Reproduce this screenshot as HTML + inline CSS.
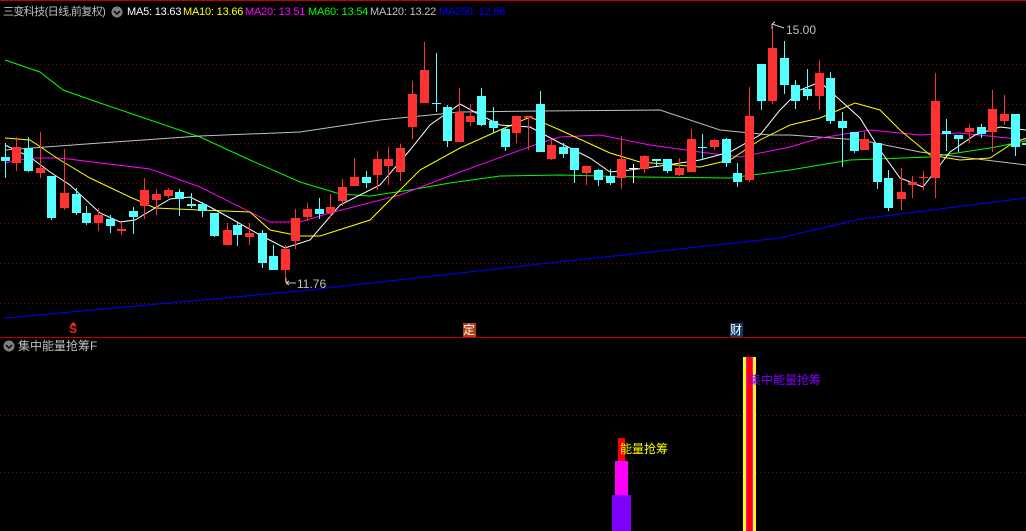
<!DOCTYPE html>
<html><head><meta charset="utf-8">
<style>
html,body{margin:0;padding:0;background:#000;overflow:hidden}
body{width:1026px;height:531px;position:relative;font-family:"Liberation Sans","Noto Sans CJK SC",sans-serif}
.t{position:absolute;font-size:12px;white-space:nowrap;line-height:14px}
.h{font-size:11px;letter-spacing:-0.2px}
</style></head><body>
<svg id="s" width="1026" height="531" style="position:absolute;left:0;top:0" shape-rendering="crispEdges">
<line x1="0" y1="0.5" x2="1026" y2="0.5" stroke="#c00000"/>
<line x1="0" y1="337.5" x2="1026" y2="337.5" stroke="#c00000"/>
<g id="grid" stroke="#800000" stroke-dasharray="1,3"></g>
<g id="ma" fill="none" stroke-width="1" shape-rendering="auto"></g>
<g id="c"></g>
<rect x="612" y="495" width="19" height="36" fill="#8000ff"/>
<rect x="615" y="461" width="13" height="34" fill="#ff00ff"/>
<rect x="618" y="438" width="7" height="23" fill="#ff0000"/>
<rect x="743" y="357" width="13" height="174" fill="#ffff00"/>
<rect x="746" y="357" width="7" height="174" fill="#ff00ff"/>
<rect x="747" y="357" width="5" height="174" fill="#ff0000"/>
<circle cx="9" cy="346" r="5.5" fill="#808080"/>
<path d="M6 345 L9 348 L12 345" stroke="#000" fill="none" stroke-width="1.5" shape-rendering="auto"/>
<circle cx="117" cy="12" r="5.5" fill="#808080"/>
<path d="M114 11 L117 14 L120 11" stroke="#000" fill="none" stroke-width="1.5" shape-rendering="auto"/>
<rect x="463" y="323" width="13" height="14" fill="#b04010"/>
<rect x="730" y="323" width="13" height="14" fill="#103868"/>
<path d="M73 322 L76 325 L70 325Z" fill="#ff2020"/>
<path d="M286 283 L296 283 M286 283 L289 281 M286 283 L289 285 M286 283 L286 278" stroke="#c0c0c0" fill="none"/>
<path d="M772 24 L784 28 M772 24 L775 22 M772 24 L772 29" stroke="#c0c0c0" fill="none"/>
</svg>
<div class="t h" style="left:3px;top:5px;color:#c0c0c0;font-size:11px;letter-spacing:-0.6px">三变科技(日线,前复权)</div>
<div class="t h" style="left:127px;top:5px;color:#fff">MA5: 13.63</div>
<div class="t h" style="left:183px;top:5px;color:#ffff00">MA10: 13.66</div>
<div class="t h" style="left:245px;top:5px;color:#ff00ff">MA20: 13.51</div>
<div class="t h" style="left:308px;top:5px;color:#00ff00">MA60: 13.54</div>
<div class="t h" style="left:370px;top:5px;color:#c0c0c0">MA120: 13.22</div>
<div class="t h" style="left:439px;top:5px;color:#0000ff">MA250: 12.86</div>
<div class="t" style="left:18px;top:339px;color:#c0c0c0">集中能量抢筹F</div>
<div class="t" style="left:297px;top:277px;color:#c0c0c0">11.76</div>
<div class="t" style="left:786px;top:23px;color:#c0c0c0">15.00</div>
<div class="t" style="left:69px;top:322px;color:#ff2020;font-weight:bold;font-size:12px">S</div>
<div class="t" style="left:463px;top:323px;color:#fff">定</div>
<div class="t" style="left:730px;top:323px;color:#fff">财</div>
<div class="t" style="left:620px;top:442px;color:#ffff00">能量抢筹</div>
<div class="t" style="left:749px;top:373px;color:#8000ff">集中能量抢筹</div>
<script>
var NS="http://www.w3.org/2000/svg";
function el(p,n,a){var e=document.createElementNS(NS,n);for(var k in a)e.setAttribute(k,a[k]);p.appendChild(e);return e;}
var g=document.getElementById('grid');
[64,104,143,183,223,263,303,415,472].forEach(function(y){el(g,'line',{x1:0,y1:y+.5,x2:1026,y2:y+.5});});
var R="#ff3232",C="#54ffff",W="#ffffff";
var d=[
[5,157,161,143,178,C],[16,147,163,137,171,R],[28,148,171,137,172,C],[40,168,173,132,178,R],[51,176,218,176,220,C],
[64,193,208,149,210,R],[76,194,213,188,215,C],[86,213,223,206,225,C],[98,215,223,208,231,R],[110,219,226,215,233,C],
[121,229,231,222,235,R],[133,211,217,207,234,C],[144,190,206,178,219,R],[156,194,200,189,215,R],[168,190,196,188,198,R],
[179,192,199,189,216,C],[191,204,206,193,208,C],[202,204,211,202,217,C],[214,213,236,213,237,C],[227,230,245,223,245,R],
[237,225,235,223,246,C],[249,233,237,223,245,R],[262,233,263,230,268,C],[273,256,270,245,270,C],[285,249,270,245,282,R],
[295,218,241,209,249,R],[307,209,217,203,221,R],[319,209,214,198,219,C],[330,207,213,194,217,R],[342,187,201,179,206,R],
[354,177,186,158,186,R],[366,177,183,171,188,C],[377,159,175,151,190,R],[388,159,166,147,185,R],[400,148,172,144,181,R],
[412,94,127,81,139,R],[424,70,103,42,103,R],[436,103,104,53,112,C],[447,107,141,105,147,C],[459,112,142,88,142,R],
[470,116,122,104,126,R],[481,96,125,88,126,C],[493,121,128,107,133,C],[505,129,147,127,151,C],[516,116,133,116,143,R],
[528,116,118,116,150,R],[540,104,152,91,152,C],[551,145,159,140,160,R],[563,147,154,143,158,C],[574,148,170,148,183,C],
[586,166,173,166,185,R],[598,170,180,169,186,C],[610,176,183,169,185,C],[621,159,178,136,189,R],[633,168,169,164,183,W],
[644,156,169,155,173,R],[656,159,161,159,166,C],[667,159,171,159,173,C],[679,168,175,158,176,R],[691,139,172,129,172,R],
[702,147,148,134,160,C],[714,140,147,139,150,R],[726,139,163,138,167,C],[737,173,182,163,187,C],[749,116,180,87,182,R],
[761,64,101,64,110,C],[772,48,101,26,104,R],[784,58,85,41,94,C],[795,85,101,80,109,C],[807,89,96,69,100,C],
[819,73,96,60,110,R],[830,78,121,72,124,C],[842,121,128,112,167,C],[854,132,151,132,153,C],[864,139,150,132,150,R],
[877,143,182,143,189,C],[888,178,208,170,211,C],[901,192,199,168,210,R],[912,182,185,176,198,R],[923,177,178,171,190,R],
[935,101,178,73,198,R],[946,131,134,119,151,C],[958,135,139,135,152,C],[969,128,132,124,143,R],[981,127,134,124,138,C],
[992,109,132,90,152,R],[1004,114,121,95,125,R],[1015,114,147,114,156,C],[1026,143,145,140,150,C]];
var cg=document.getElementById('c');
d.forEach(function(c){var x=c[0];
el(cg,'rect',{x:x,y:c[3],width:1,height:c[4]-c[3],fill:c[5]});
el(cg,'rect',{x:x-4,y:c[1],width:9,height:Math.max(1,c[2]-c[1]),fill:c[5]});});
var m=document.getElementById('ma');
function pl(col,pts){el(m,'polyline',{stroke:col,points:pts});}
pl("#0000ff","5,318 300,291 540,264 780,238 860,219 1026,198");
pl("#00ff00","5,60 40,72 63,90 100,103 200,137 250,160 300,182 340,194 370,196 410,190 450,183 500,176 560,175 640,177 730,178 760,174 790,170 850,160 930,157 990,148 1026,141");
pl("#c0c0c0","5,150 100,143 200,136 300,132 380,120 460,112 540,111 660,110 720,130 770,135 790,135 860,140 920,152 1026,165");
pl("#ff00ff","5,163 30,158 60,158 150,169 200,187 270,222 300,222 330,213 400,195 460,172 540,143 560,137 600,135 650,145 700,152 740,157 790,147 820,138 870,130 920,135 960,133 1026,140");
pl("#ffff00","5,138 30,140 60,160 90,178 130,197 155,208 200,210 250,212 270,230 300,236 320,236 370,220 420,170 460,148 500,130 530,117 560,130 610,153 640,162 700,167 730,160 760,140 790,125 820,118 855,103 880,110 900,130 930,155 960,160 990,158 1010,145 1026,138");
pl("#ffffff","5,145 30,157 50,172 70,185 100,213 120,222 135,220 170,199 190,197 210,207 230,218 260,235 285,248 310,240 340,205 380,185 410,150 430,125 460,104 480,115 500,125 530,127 560,143 590,158 610,172 630,170 660,166 700,160 730,152 760,135 780,110 800,90 820,82 840,100 860,118 880,150 900,178 923,187 950,152 975,135 1000,127 1026,130");
</script>
</body></html>
